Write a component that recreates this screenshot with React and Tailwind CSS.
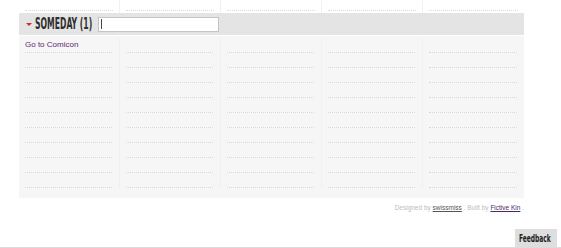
// App.jsx - someday list board (5 columns of dotted rows)

const cols = [0, 1, 2, 3, 4];
const rows = [0, 1, 2, 3, 4, 5, 6, 7, 8, 9];

function App() {
  return (
    <div className="relative w-[561px] h-[248px] bg-white overflow-hidden font-['Liberation_Sans',Arial,sans-serif]">
      <div className="ml-[19px] w-[505px]">
        {/* top strip of the previous section */}
        <div className="grid grid-cols-5 h-[13px]">
          {cols.map(c => (
            <div key={c} className={`px-[6px] ${c < 4 ? 'border-r border-[#f1f1f1]' : ''}`}>
              <div className="h-[11px] border-b border-dotted border-[#dadada]" />
            </div>
          ))}
        </div>

        {/* header */}
        <div className="flex items-center h-[22px] bg-[#e4e4e4]">
          <span className="ml-[7px] w-0 h-0 border-l-[3px] border-r-[3px] border-t-[3px] border-l-transparent border-r-transparent border-t-[#d42a2a]" />
          <span className="ml-[3px] w-[57px] whitespace-nowrap">
            <span className="inline-block origin-left scale-x-[0.57] text-[15px] leading-none font-bold text-[#2e2e2e] font-['DejaVu_Sans_Condensed','DejaVu_Sans',sans-serif]">
              SOMEDAY (1)
            </span>
          </span>
          <div className="ml-[6px] w-[121px] h-[15px] bg-white border border-[#c4c4c4] flex items-center">
            <span className="ml-[2px] w-[1px] h-[10px] bg-[#444]" />
          </div>
        </div>

        {/* list grid */}
        <div className="mt-[1px] grid grid-cols-5 bg-[#f6f6f6] pt-[2px] pb-[10px]">
          {cols.map(c => (
            <div key={c} className={`pl-[6px] pr-[7px] ${c < 4 ? 'border-r border-[#f0f0f0]' : ''}`}>
              {rows.map(r => (
                <div key={r} className="h-[15px] border-b border-dotted border-[#d8d8d8] flex items-center text-[8px] text-[#5b2a6e]">
                  {c === 0 && r === 0 ? 'Go to Comicon' : ''}
                </div>
              ))}
            </div>
          ))}
        </div>

        {/* credits */}
        <div className="mt-[5px] text-right text-[6.5px] text-[#bdbdbd]">
          Designed by <span className="text-[#555] underline">swissmiss</span> . Built by <span className="text-[#4a2a66] underline">Fictive Kin</span> .
        </div>
      </div>

      {/* feedback tab */}
      <div className="absolute left-[515px] top-[229px] w-[42px] h-[18px] bg-[#dedede] flex items-center pl-[4px] whitespace-nowrap">
        <span className="inline-block origin-left scale-x-[0.6] text-[11px] leading-none font-bold text-[#222] font-['DejaVu_Sans_Condensed','DejaVu_Sans',sans-serif]">
          Feedback
        </span>
      </div>
      <div className="absolute left-0 right-0 bottom-0 h-[1px] bg-[#dcdcdc]" />
    </div>
  );
}

export default App;
